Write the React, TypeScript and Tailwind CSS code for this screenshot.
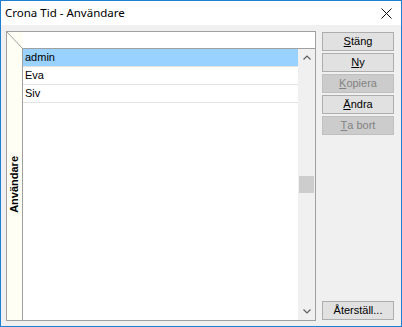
import { ReactNode } from "react";

const rows = ["admin", "Eva", "Siv"];

function Btn({ children, disabled }: { children: ReactNode; disabled?: boolean }) {
  return (
    <button
      className={
        disabled
          ? "h-[19px] w-full border border-[#bfbfbf] bg-[#cccccc] text-[#838383] text-[11px] leading-none flex items-center justify-center"
          : "h-[19px] w-full border border-[#adadad] bg-[#e1e1e1] text-black text-[11px] leading-none flex items-center justify-center"
      }
    >
      {children}
    </button>
  );
}

export default function App() {
  return (
    <div
      className="w-[402px] h-[327px] border border-[#1e80d2] bg-[#f0f0f0] flex flex-col"
      style={{ fontFamily: '"Liberation Sans", Arial, sans-serif' }}
    >
      {/* title bar */}
      <div className="h-[24px] bg-white flex items-center justify-between pl-[4px] pr-[9px]">
        <span className="text-[11.5px] text-black" style={{ fontFamily: '"Noto Sans", sans-serif' }}>
          Crona Tid - Användare
        </span>
        <svg width="11" height="11" viewBox="0 0 11 11">
          <path d="M0.5 0.5 L10.5 10.5 M10.5 0.5 L0.5 10.5" stroke="#111" strokeWidth="1" />
        </svg>
      </div>

      <div className="flex-1 flex pt-[6px] pl-[5px]">
        {/* grid panel */}
        <div className="w-[310px] h-[290px] border border-[#a0a0a0] flex flex-col">
          <div className="flex h-[17px]">
            <div className="w-[16px] h-[17px] bg-[#fffef4]">
              <svg width="16" height="17" viewBox="0 0 16 17">
                <path d="M0 0 L16 17" stroke="#a0a0a0" strokeWidth="1" />
              </svg>
            </div>
            <div className="flex-1 bg-white border-b border-[#a0a0a0]" />
          </div>
          <div className="flex flex-1">
            <div className="w-[16px] bg-[#fffef4] border-r border-[#a0a0a0] flex items-center justify-center">
              <span className="[writing-mode:vertical-rl] rotate-180 text-[11px] font-bold text-black leading-none">
                Användare
              </span>
            </div>
            <div className="flex-1 flex bg-white">
              <div className="flex-1 flex flex-col">
                {rows.map((r, i) => (
                  <div
                    key={r}
                    className={
                      i === 0
                        ? "h-[18px] bg-[#99d1ff] border-b border-[#e3e3e3] flex items-center pl-[2px] text-[11px] text-black"
                        : "h-[18px] border-b border-[#e3e3e3] flex items-center pl-[2px] text-[11px] text-black"
                    }
                  >
                    {r}
                  </div>
                ))}
              </div>
              {/* scrollbar */}
              <div className="w-[17px] bg-[#f0f0f0] flex flex-col">
                <div className="h-[17px] flex items-center justify-center">
                  <svg width="8" height="5" viewBox="0 0 8 5">
                    <path d="M0.5 4.5 L4 1 L7.5 4.5" stroke="#606060" strokeWidth="1.2" fill="none" />
                  </svg>
                </div>
                <div className="flex-1" />
                <div className="h-[17px] mx-[1px] bg-[#cdcdcd]" />
                <div className="flex-1" />
                <div className="h-[17px] flex items-center justify-center">
                  <svg width="8" height="5" viewBox="0 0 8 5">
                    <path d="M0.5 0.5 L4 4 L7.5 0.5" stroke="#606060" strokeWidth="1.2" fill="none" />
                  </svg>
                </div>
              </div>
            </div>
          </div>
        </div>

        {/* buttons */}
        <div className="ml-[6px] w-[72px] h-[290px] flex flex-col gap-[2px] pt-[1px] pb-[1px]">
          <Btn>
            <u>S</u>täng
          </Btn>
          <Btn>
            <u>N</u>y
          </Btn>
          <Btn disabled>
            <u>K</u>opiera
          </Btn>
          <Btn>
            <u>Ä</u>ndra
          </Btn>
          <Btn disabled>
            <u>T</u>a bort
          </Btn>
          <div className="mt-auto">
            <Btn>Återställ...</Btn>
          </div>
        </div>
      </div>
    </div>
  );
}
